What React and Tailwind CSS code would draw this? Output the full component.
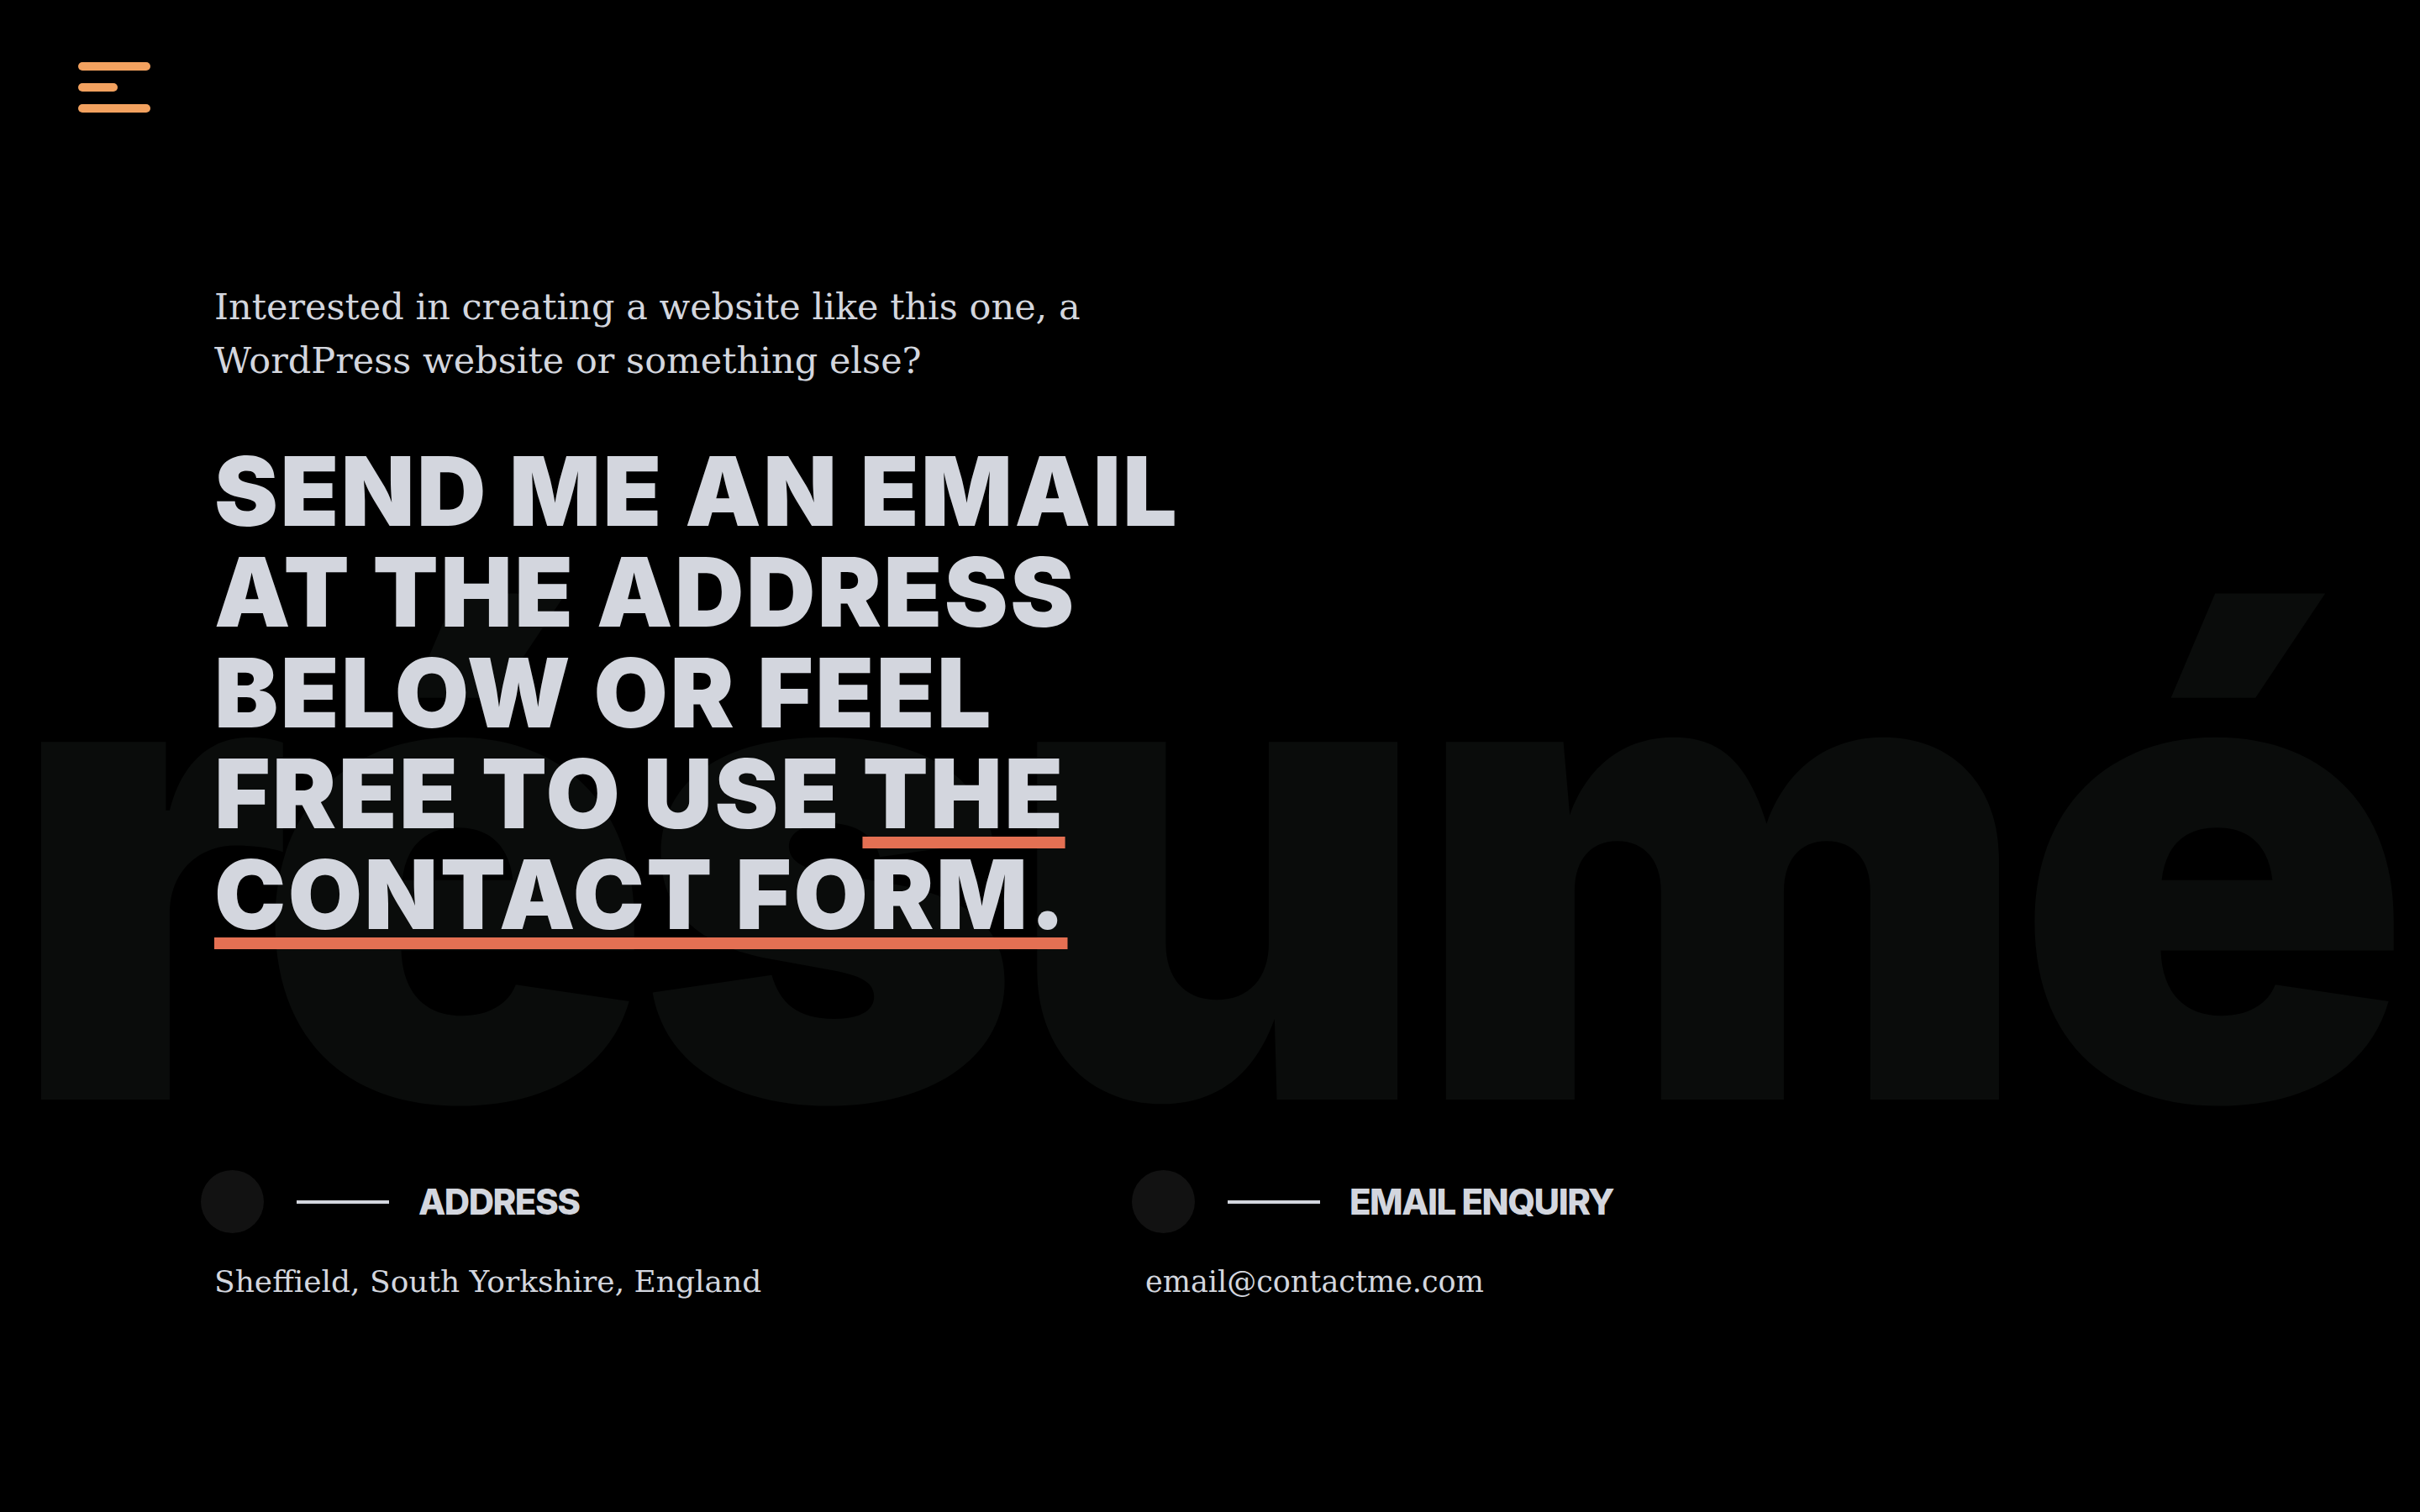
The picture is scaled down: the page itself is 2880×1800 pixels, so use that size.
import React from "react";

const serif = { fontFamily: '"DejaVu Serif", "Liberation Serif", serif' };
const sans = { fontFamily: 'Inter, Lato, "Open Sans", sans-serif' };

function ContactItem({ label, size, children }) {
  return (
    <div>
      <div className="flex items-center h-[75px]">
        <span className="-ml-[16px] w-[75px] h-[75px] rounded-full bg-[#121212]" />
        <span className="ml-[39px] w-[110px] h-[4px] bg-[#d3d6de]" />
        <span className="ml-[35px] text-[42px] font-extrabold text-[#d3d6de] tracking-[-1.5px]" style={sans}>
          {label}
        </span>
      </div>
      <p className={`mt-[34px] ${size} leading-[48px] text-[#d3d6de]`} style={serif}>
        {children}
      </p>
    </div>
  );
}

export default function App() {
  return (
    <div className="relative min-h-screen bg-black overflow-hidden">
      {/* big faded word behind the content */}
      <div
        aria-hidden="true"
        className="absolute left-[10px] top-[635px] text-[780px] leading-none font-black text-[#0a0c0b] tracking-[-20px] select-none whitespace-nowrap"
        style={sans}
      >
        résumé
      </div>

      <div className="relative">
        <header className="pt-[74px] pl-[93px]">
          <button className="flex flex-col gap-[15px]" aria-label="Menu">
            <span className="block w-[86px] h-[10px] rounded-full bg-[#f2a15f]" />
            <span className="block w-[47px] h-[10px] rounded-full bg-[#f2a15f]" />
            <span className="block w-[86px] h-[10px] rounded-full bg-[#f2a15f]" />
          </button>
        </header>

        <section className="pl-[255px] pt-[199px]">
          <p className="text-[43px] leading-[64px] text-[#d3d6de]" style={serif}>
            Interested in creating a website like this one, a
            <br />
            WordPress website or something else?
          </p>

          <h2
            className="mt-[64px] text-[114px] leading-[120px] font-black uppercase text-[#d3d6de] tracking-[2.5px]"
            style={sans}
          >
            Send me an email
            <br />
            at the address
            <br />
            below or feel
            <br />
            free to use{" "}
            <a
              href="#contact"
              className="underline decoration-[#e47053] decoration-[14px] underline-offset-[10px]"
            >
              the
              <br />
              contact form.
            </a>
          </h2>

          <div className="mt-[268px] grid grid-cols-[1108px_1fr]">
            <ContactItem label="ADDRESS" size="text-[36px]">
              Sheffield, South Yorkshire, England
            </ContactItem>
            <ContactItem label="EMAIL ENQUIRY" size="text-[35px]">
              email@contactme.com
            </ContactItem>
          </div>
        </section>
      </div>
    </div>
  );
}
